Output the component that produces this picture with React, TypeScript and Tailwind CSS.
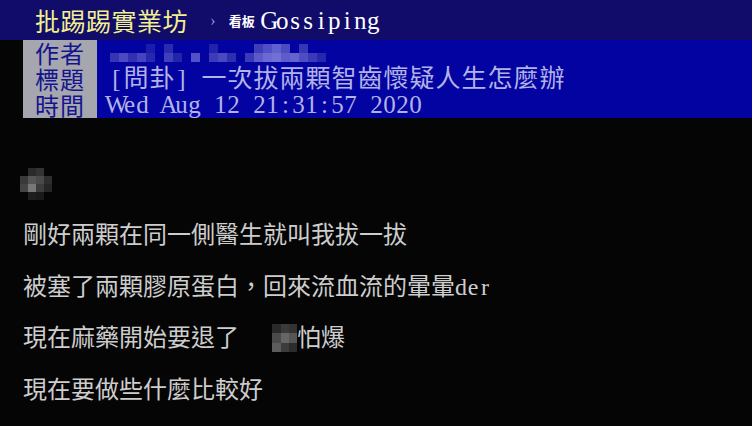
import React from "react";

const CJK = /[\u2e80-\u9fff\uf900-\ufaff\uff00-\uffef]/;

// terminal style text: every char takes one (half) or two (full width) cells
function Cells({ text, half, full }: { text: string; half: string; full: string }) {
  return (
    <>
      {Array.from(text).map((c, i) => (
        <span
          key={i}
          className={`inline-flex justify-center ${CJK.test(c) ? full : half}`}
        >
          {c === " " ? "\u00a0" : c}
        </span>
      ))}
    </>
  );
}

type Block = [number, number, number, number, string];

function Mosaic({ w, h, blocks }: { w: number; h: number; blocks: Block[] }) {
  return (
    <svg width={w} height={h} viewBox={`0 0 ${w} ${h}`} className="block">
      {blocks.map(([x, y, bw, bh, fill], i) => (
        <rect key={i} x={x} y={y} width={bw} height={bh} fill={fill} />
      ))}
    </svg>
  );
}

const authorBlocks: Block[] = [
  [0, 9, 9, 9, "#3434b4"],
  [9, 9, 9, 9, "#4a4ac2"],
  [18, 9, 9, 9, "#3030b0"],
  [27, 9, 9, 9, "#4444be"],
  [36, 0, 9, 9, "#1c1cac"],
  [36, 9, 9, 9, "#2828ae"],
  [54, 0, 9, 9, "#2a2ab2"],
  [54, 9, 9, 9, "#4040bc"],
  [63, 9, 9, 9, "#2424aa"],
  [81, 9, 9, 9, "#5252c6"],
  [99, 0, 9, 9, "#2222ac"],
  [99, 9, 9, 9, "#3c3cba"],
  [108, 9, 9, 9, "#4a4ac0"],
  [117, 9, 9, 9, "#2e2eb0"],
  [135, 9, 9, 9, "#3a3ab8"],
  [144, 0, 9, 9, "#3e3eba"],
  [144, 9, 9, 9, "#5a5ac8"],
  [153, 0, 9, 9, "#5050c4"],
  [153, 9, 9, 9, "#6a6ad2"],
  [162, 0, 9, 9, "#6060ce"],
  [162, 9, 9, 9, "#7070d6"],
  [171, 0, 9, 9, "#4c4cc2"],
  [171, 9, 9, 9, "#5c5cca"],
  [180, 9, 9, 9, "#6464ce"],
  [189, 0, 9, 9, "#3636b6"],
  [189, 9, 9, 9, "#4e4ec4"],
  [198, 9, 9, 9, "#3a3ab8"],
  [207, 9, 9, 9, "#2626ae"],
];

const avatarBlocks: Block[] = [
  [8, 0, 8, 8, "#2a2a2a"],
  [16, 0, 8, 8, "#333333"],
  [0, 8, 8, 8, "#3a3a3a"],
  [8, 8, 8, 8, "#555555"],
  [16, 8, 8, 8, "#4a4a4a"],
  [24, 8, 8, 8, "#2e2e2e"],
  [0, 16, 8, 8, "#444444"],
  [8, 16, 8, 8, "#777777"],
  [16, 16, 8, 8, "#3c3c3c"],
  [24, 16, 8, 8, "#262626"],
  [8, 24, 8, 8, "#1e1e1e"],
  [16, 24, 8, 8, "#1a1a1a"],
];

const inlineBlocks: Block[] = [
  [0, 0, 9, 9, "#2a2a2a"],
  [9, 0, 8, 9, "#3a3a3a"],
  [17, 0, 8, 9, "#333333"],
  [0, 9, 9, 10, "#4a4a4a"],
  [9, 9, 8, 10, "#666666"],
  [17, 9, 8, 10, "#555555"],
  [0, 19, 9, 9, "#5c5c5c"],
  [9, 19, 8, 9, "#3c3c3c"],
  [17, 19, 8, 9, "#2c2c2c"],
];

const serif = "font-['Liberation_Serif','Noto_Sans_CJK_TC',serif]";

function HeaderRow({ label, children }: { label: string; children: React.ReactNode }) {
  return (
    <div className="flex h-[26px]">
      <div className="w-[74px] pl-[12px] flex items-center bg-[#a6a6ae] text-[#14148e] text-[24px] leading-[24px] font-['Noto_Sans_CJK_TC',sans-serif] tracking-[1px]">
        {label}
      </div>
      <div className="flex-1 pl-[13px] flex items-center bg-[#0303a2] text-[#b2b2e6] text-[25px] leading-[24px]">
        {children}
      </div>
    </div>
  );
}

function BodyLine({ children }: { children: React.ReactNode }) {
  return (
    <div className="h-[51.5px] flex items-center text-[24px] leading-[26px] text-[#cdcdcd]">
      {children}
    </div>
  );
}

export default function App() {
  return (
    <div className={`w-[752px] h-[426px] overflow-hidden bg-[#050505] ${serif}`}>
      <div className="h-[40px] flex items-center pl-[35px] bg-[#110b69]">
        <span className="text-[25px] leading-none tracking-[0.5px] text-[#f3f08e] font-['Noto_Sans_CJK_TC',sans-serif]">
          批踢踢實業坊
        </span>
        <span className="ml-[22px] text-[17px] leading-none text-[#8a8ad0]">›</span>
        <span className="ml-[13px] text-[13px] leading-none font-bold text-white font-['Noto_Sans_CJK_TC',sans-serif]">
          看板
        </span>
        <span className="ml-[8px] text-[25px] leading-none text-white">
          <Cells text="Gossiping" half="w-[13px]" full="w-[26px]" />
        </span>
      </div>

      <div className="pl-[23px]">
        <HeaderRow label="作者">
          <Mosaic w={218} h={18} blocks={authorBlocks} />
        </HeaderRow>
        <HeaderRow label="標題">
          <Cells text="[問卦] 一次拔兩顆智齒懷疑人生怎麼辦" half="w-[13px]" full="w-[26px]" />
        </HeaderRow>
        <HeaderRow label="時間">
          <Cells text="Wed Aug 12 21:31:57 2020" half="w-[13px]" full="w-[26px]" />
        </HeaderRow>
      </div>

      <div className="pl-[23px] pt-[40px]">
        <BodyLine>
          <div className="-ml-[3px]">
            <Mosaic w={32} h={32} blocks={avatarBlocks} />
          </div>
        </BodyLine>
        <BodyLine>
          <Cells text="剛好兩顆在同一側醫生就叫我拔一拔" half="w-[12px]" full="w-[24px]" />
        </BodyLine>
        <BodyLine>
          <Cells text="被塞了兩顆膠原蛋白，回來流血流的暈暈der" half="w-[12px]" full="w-[24px]" />
        </BodyLine>
        <BodyLine>
          <Cells text="現在麻藥開始要退了  " half="w-[12px]" full="w-[24px]" />
          <div className="ml-[9px]">
            <Mosaic w={25} h={28} blocks={inlineBlocks} />
          </div>
          <Cells text="怕爆" half="w-[12px]" full="w-[24px]" />
        </BodyLine>
        <BodyLine>
          <Cells text="現在要做些什麼比較好" half="w-[12px]" full="w-[24px]" />
        </BodyLine>
      </div>
    </div>
  );
}
